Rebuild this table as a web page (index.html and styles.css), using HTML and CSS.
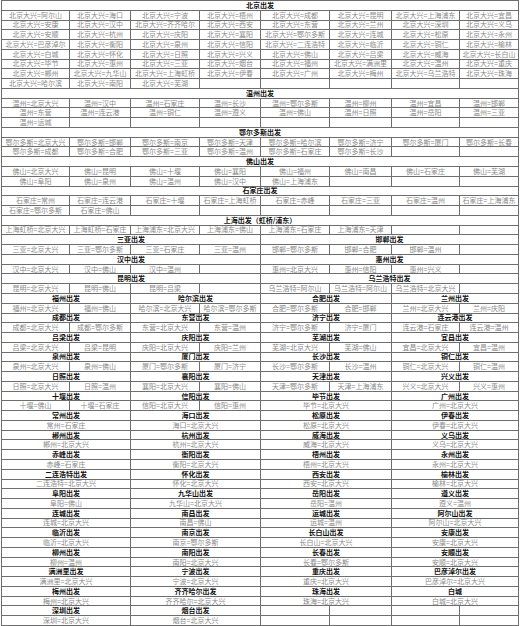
FILE: index.html
```html
<!DOCTYPE html>
<html lang="zh">
<head>
<meta charset="utf-8">
<title>航线表</title>
<link rel="stylesheet" href="styles.css">
</head>
<body>
<div class="sheet">
  <div class="s8 h">北京出发</div>
  <div>北京大兴=阿尔山</div><div>北京大兴=海口</div><div>北京大兴=宁波</div><div>北京大兴=梧州</div><div>北京大兴=成都</div><div>北京大兴=昆明</div><div>北京大兴=上海浦东</div><div>北京大兴=宜昌</div>
  <div>北京大兴=安康</div><div>北京大兴=汉中</div><div>北京大兴=齐齐哈尔</div><div>北京大兴=西安</div><div>北京大兴=东营</div><div>北京大兴=兰州</div><div>北京大兴=深圳</div><div>北京大兴=义乌</div>
  <div>北京大兴=安顺</div><div>北京大兴=杭州</div><div>北京大兴=庆阳</div><div>北京大兴=襄阳</div><div>北京大兴=鄂尔多斯</div><div>北京大兴=连城</div><div>北京大兴=松原</div><div>北京大兴=永州</div>
  <div>北京大兴=巴彦淖尔</div><div>北京大兴=衡阳</div><div>北京大兴=泉州</div><div>北京大兴=信阳</div><div>北京大兴=二连浩特</div><div>北京大兴=临沂</div><div>北京大兴=铜仁</div><div>北京大兴=榆林</div>
  <div>北京大兴=白城</div><div>北京大兴=怀化</div><div>北京大兴=日照</div><div>北京大兴=兴义</div><div>北京大兴=佛山</div><div>北京大兴=吕梁</div><div>北京大兴=威海</div><div>北京大兴=长白山</div>
  <div>北京大兴=毕节</div><div>北京大兴=惠州</div><div>北京大兴=三亚</div><div>北京大兴=烟台</div><div>北京大兴=福州</div><div>北京大兴=满洲里</div><div>北京大兴=温州</div><div>北京大兴=重庆</div>
  <div>北京大兴=郴州</div><div>北京大兴=九华山</div><div>北京大兴=上海虹桥</div><div>北京大兴=伊春</div><div>北京大兴=广州</div><div>北京大兴=梅州</div><div>北京大兴=乌兰浩特</div><div>北京大兴=珠海</div>
  <div>北京大兴=哈尔滨</div><div>北京大兴=南阳</div><div>北京大兴=芜湖</div><div></div><div></div><div></div><div></div><div></div>

  <div class="s8 h">温州出发</div>
  <div>温州=北京大兴</div><div>温州=汉中</div><div>温州=石家庄</div><div>温州=长沙</div><div>温州=鄂尔多斯</div><div>温州=柳州</div><div>温州=宜昌</div><div>温州=邯郸</div>
  <div>温州=东营</div><div>温州=连云港</div><div>温州=铜仁</div><div>温州=遵义</div><div>温州=佛山</div><div>温州=日照</div><div>温州=岳阳</div><div>温州=三亚</div>
  <div>温州=运城</div><div></div><div></div><div></div><div></div><div></div><div></div><div></div>

  <div class="s8 h">鄂尔多斯出发</div>
  <div>鄂尔多斯=北京大兴</div><div>鄂尔多斯=邯郸</div><div>鄂尔多斯=南京</div><div>鄂尔多斯=天津</div><div>鄂尔多斯=哈尔滨</div><div>鄂尔多斯=济宁</div><div>鄂尔多斯=厦门</div><div>鄂尔多斯=长春</div>
  <div>鄂尔多斯=成都</div><div>鄂尔多斯=合肥</div><div>鄂尔多斯=三亚</div><div>鄂尔多斯=温州</div><div>鄂尔多斯=石家庄</div><div>鄂尔多斯=长沙</div><div></div><div></div>

  <div class="s8 h">佛山出发</div>
  <div>佛山=北京大兴</div><div>佛山=昆明</div><div>佛山=十堰</div><div>佛山=襄阳</div><div>佛山=福州</div><div>佛山=南昌</div><div>佛山=石家庄</div><div>佛山=芜湖</div>
  <div>佛山=阜阳</div><div>佛山=泉州</div><div>佛山=温州</div><div>佛山=汉中</div><div>佛山=上海浦东</div><div></div><div></div><div></div>

  <div class="s8 h">石家庄出发</div>
  <div>石家庄=常州</div><div>石家庄=连云港</div><div>石家庄=十堰</div><div>石家庄=上海虹桥</div><div>石家庄=赤峰</div><div>石家庄=三亚</div><div>石家庄=温州</div><div>石家庄=上海浦东</div>
  <div>石家庄=鄂尔多斯</div><div>石家庄=佛山</div><div></div><div></div><div></div><div></div><div></div><div></div>

  <div class="s8 h">上海出发（虹桥/浦东）</div>
  <div>上海虹桥=北京大兴</div><div>上海虹桥=石家庄</div><div>上海浦东=北京大兴</div><div>上海浦东=佛山</div><div>上海浦东=石家庄</div><div>上海浦东=天津</div><div></div><div></div>

  <div class="s4 h">三亚出发</div><div class="s4 h">邯郸出发</div>
  <div>三亚=北京大兴</div><div>三亚=鄂尔多斯</div><div>三亚=石家庄</div><div>三亚=温州</div><div>邯郸=鄂尔多斯</div><div>邯郸=合肥</div><div>邯郸=温州</div><div></div>

  <div class="s4 h">汉中出发</div><div class="s4 h">惠州出发</div>
  <div>汉中=北京大兴</div><div>汉中=佛山</div><div>汉中=温州</div><div></div><div>惠州=北京大兴</div><div>惠州=信阳</div><div>惠州=兴义</div><div></div>

  <div class="s4 h">昆明出发</div><div class="s4 h">乌兰浩特出发</div>
  <div>昆明=北京大兴</div><div>昆明=佛山</div><div>昆明=吕梁</div><div></div><div>乌兰浩特=阿尔山</div><div>乌兰浩特=阿尔山</div><div>乌兰浩特=北京大兴</div><div></div>

  <div class="s2 h">福州出发</div><div class="s2 h">哈尔滨出发</div><div class="s2 h">合肥出发</div><div class="s2 h">兰州出发</div>
  <div>福州=北京大兴</div><div>福州=佛山</div><div>哈尔滨=北京大兴</div><div>哈尔滨=鄂尔多斯</div><div>合肥=鄂尔多斯</div><div>合肥=邯郸</div><div>兰州=北京大兴</div><div>兰州=庆阳</div>

  <div class="s2 h">成都出发</div><div class="s2 h">东营出发</div><div class="s2 h">济宁出发</div><div class="s2 h">连云港出发</div>
  <div>成都=北京大兴</div><div>成都=鄂尔多斯</div><div>东营=北京大兴</div><div>东营=温州</div><div>济宁=鄂尔多斯</div><div>济宁=厦门</div><div>连云港=石家庄</div><div>连云港=温州</div>

  <div class="s2 h">吕梁出发</div><div class="s2 h">庆阳出发</div><div class="s2 h">芜湖出发</div><div class="s2 h">宜昌出发</div>
  <div>吕梁=北京大兴</div><div>吕梁=昆明</div><div>庆阳=北京大兴</div><div>庆阳=兰州</div><div>芜湖=北京大兴</div><div>芜湖=佛山</div><div>宜昌=北京大兴</div><div>宜昌=温州</div>

  <div class="s2 h">泉州出发</div><div class="s2 h">厦门出发</div><div class="s2 h">长沙出发</div><div class="s2 h">铜仁出发</div>
  <div>泉州=北京大兴</div><div>泉州=佛山</div><div>厦门=鄂尔多斯</div><div>厦门=济宁</div><div>长沙=鄂尔多斯</div><div>长沙=温州</div><div>铜仁=北京大兴</div><div>铜仁=温州</div>

  <div class="s2 h">日照出发</div><div class="s2 h">襄阳出发</div><div class="s2 h">天津出发</div><div class="s2 h">兴义出发</div>
  <div>日照=北京大兴</div><div>日照=温州</div><div>襄阳=北京大兴</div><div>襄阳=佛山</div><div>天津=鄂尔多斯</div><div>天津=上海浦东</div><div>兴义=北京大兴</div><div>兴义=惠州</div>

  <div class="s2 h">十堰出发</div><div class="s2 h">信阳出发</div><div class="s2 h">毕节出发</div><div class="s2 h">广州出发</div>
  <div>十堰=佛山</div><div>十堰=石家庄</div><div>信阳=北京大兴</div><div>信阳=惠州</div><div class="s2">毕节=北京大兴</div><div class="s2">广州=北京大兴</div>

  <div class="s2 h">常州出发</div><div class="s2 h">海口出发</div><div class="s2 h">松原出发</div><div class="s2 h">伊春出发</div>
  <div class="s2">常州=石家庄</div><div class="s2">海口=北京大兴</div><div class="s2">松原=北京大兴</div><div class="s2">伊春=北京大兴</div>

  <div class="s2 h">郴州出发</div><div class="s2 h">杭州出发</div><div class="s2 h">威海出发</div><div class="s2 h">义乌出发</div>
  <div class="s2">郴州=北京大兴</div><div class="s2">杭州=北京大兴</div><div class="s2">威海=北京大兴</div><div class="s2">义乌=北京大兴</div>

  <div class="s2 h">赤峰出发</div><div class="s2 h">衡阳出发</div><div class="s2 h">梧州出发</div><div class="s2 h">永州出发</div>
  <div class="s2">赤峰=石家庄</div><div class="s2">衡阳=北京大兴</div><div class="s2">梧州=北京大兴</div><div class="s2">永州=北京大兴</div>

  <div class="s2 h">二连浩特出发</div><div class="s2 h">怀化出发</div><div class="s2 h">西安出发</div><div class="s2 h">榆林出发</div>
  <div class="s2">二连浩特=北京大兴</div><div class="s2">怀化=北京大兴</div><div class="s2">西安=北京大兴</div><div class="s2">榆林=北京大兴</div>

  <div class="s2 h">阜阳出发</div><div class="s2 h">九华山出发</div><div class="s2 h">岳阳出发</div><div class="s2 h">遵义出发</div>
  <div class="s2">阜阳=佛山</div><div class="s2">九华山=北京大兴</div><div class="s2">岳阳=温州</div><div class="s2">遵义=温州</div>

  <div class="s2 h">连城出发</div><div class="s2 h">南昌出发</div><div class="s2 h">运城出发</div><div class="s2 h">阿尔山出发</div>
  <div class="s2">连城=北京大兴</div><div class="s2">南昌=佛山</div><div class="s2">运城=温州</div><div class="s2">阿尔山=北京大兴</div>

  <div class="s2 h">临沂出发</div><div class="s2 h">南京出发</div><div class="s2 h">长白山出发</div><div class="s2 h">安康出发</div>
  <div class="s2">临沂=北京大兴</div><div class="s2">南京=鄂尔多斯</div><div class="s2">长白山=北京大兴</div><div class="s2">安康=北京大兴</div>

  <div class="s2 h">柳州出发</div><div class="s2 h">南阳出发</div><div class="s2 h">长春出发</div><div class="s2 h">安顺出发</div>
  <div class="s2">柳州=温州</div><div class="s2">南阳=北京大兴</div><div class="s2">长春=鄂尔多斯</div><div class="s2">安顺=北京大兴</div>

  <div class="s2 h">满洲里出发</div><div class="s2 h">宁波出发</div><div class="s2 h">重庆出发</div><div class="s2 h">巴彦淖尔出发</div>
  <div class="s2">满洲里=北京大兴</div><div class="s2">宁波=北京大兴</div><div class="s2">重庆=北京大兴</div><div class="s2">巴彦淖尔=北京大兴</div>

  <div class="s2 h">梅州出发</div><div class="s2 h">齐齐哈尔出发</div><div class="s2 h">珠海出发</div><div class="s2 h">白城</div>
  <div class="s2">梅州=北京大兴</div><div class="s2">齐齐哈尔=北京大兴</div><div class="s2">珠海=北京大兴</div><div class="s2">白城=北京大兴</div>

  <div class="s2 h">深圳出发</div><div class="s2 h">烟台出发</div><div></div><div></div><div></div><div></div>
  <div class="s2">深圳=北京大兴</div><div class="s2">烟台=北京大兴</div><div></div><div></div><div></div><div></div>
</div>
</body>
</html>
```

FILE: styles.css
```css
html, body {
  margin: 0;
  padding: 0;
  background: #ffffff;
}

body {
  font-family: "Noto Sans CJK SC", "Noto Sans", sans-serif;
}

.sheet {
  display: grid;
  grid-template-columns: 68px 61px 69px 61px 69px 62px 68px 59px;
  grid-template-rows: repeat(64, 1fr);
  width: 518px;
  height: 626px;
  margin-left: 1px;
  box-sizing: border-box;
  border-top: 1px solid #6e6e6e;
  border-left: 1px solid #6e6e6e;
}

.sheet > div {
  display: flex;
  align-items: center;
  justify-content: center;
  min-width: 0;
  min-height: 0;
  overflow: hidden;
  white-space: nowrap;
  border-right: 1px solid #6e6e6e;
  border-bottom: 1px solid #6e6e6e;
  font-size: 7px;
  line-height: 1;
  color: #8a8a8a;
}

.sheet > .h {
  color: #111111;
  font-weight: 700;
}

.s2 { grid-column: span 2; }
.s4 { grid-column: span 4; }
.s8 { grid-column: span 8; }
```
